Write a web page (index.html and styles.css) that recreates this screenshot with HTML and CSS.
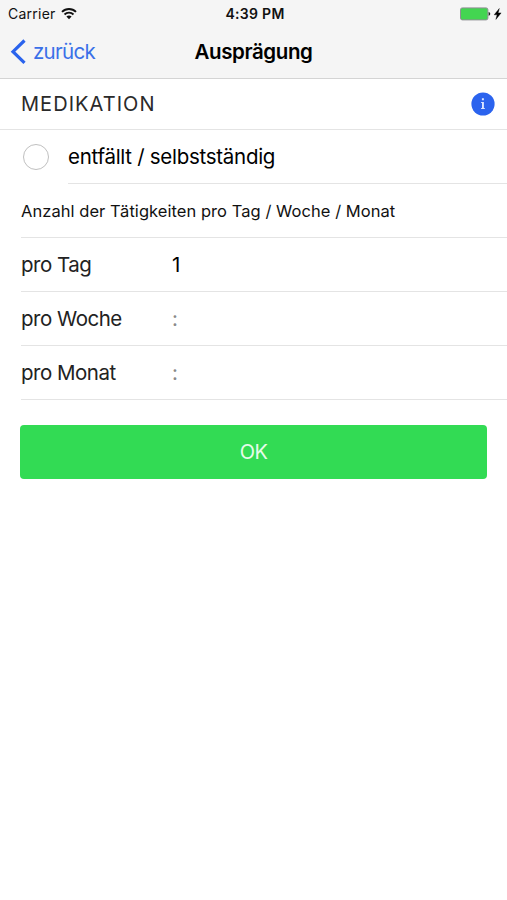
FILE: index.html
```html
<!DOCTYPE html>
<html lang="de">
<head>
  <meta charset="UTF-8" />
  <meta name="viewport" content="width=device-width, initial-scale=1.0"/>
  <title>Ausprägung</title>
  <link rel="stylesheet" href="styles.css">
</head>
<body>

  <!-- Header -->
  <header>
    <div class="statusbar">
      <div class="carrier">
        <span>Carrier</span>
        <svg class="wifi" viewBox="0 0 16 12" width="16" height="12">
          <path d="M1 3.9a10 10 0 0 1 14 0M3.5 6.5a6.4 6.4 0 0 1 9 0" fill="none" stroke="#111" stroke-width="1.9"/>
          <path d="M5.4 8.6a3.8 3.8 0 0 1 5.2 0L8 11.3z" fill="#111"/>
        </svg>
      </div>
      <div class="time">4:39 PM</div>
      <div class="power">
        <svg viewBox="0 0 42 14" width="42" height="14">
          <rect x="0.5" y="0.9" width="27.4" height="12" rx="1.8" fill="#43d551" stroke="#8f8f94"/>
          <path d="M28.6 5.1c2.2.3 2.2 3.4 0 3.7z" fill="#222"/>
          <path d="M39.3 1.5L34.2 7.8h2.9l-1.2 4.6 5.2-6.5h-3z" fill="#000" stroke="#000" stroke-width="0.4"/>
        </svg>
      </div>
    </div>
    <div class="navbar">
      <a href="#" class="back">
        <svg viewBox="0 0 16 26" width="16" height="26">
          <path d="M14.5 1.5L3 12.7l11.5 11.2" fill="none" stroke="#2a63ed" stroke-width="3.2"/>
        </svg>
        <span>zurück</span>
      </a>
      <h1>Ausprägung</h1>
    </div>
  </header>

  <!-- Form -->
  <main>
    <div class="list-header">
      <h2>MEDIKATION</h2>
      <button type="button" class="info" aria-label="Info">
        <svg viewBox="0 0 24 24" width="24" height="24">
          <circle cx="12" cy="12" r="11.6" fill="#2b63ee"/>
          <path d="M10.9 6.3h2v2h-2zM10.1 9.9h2.8v6.2h.9v1h-3.7v-1h.9v-5.2h-.9z" fill="#dbe5ff"/>
        </svg>
      </button>
    </div>

    <label class="option">
      <input type="radio" name="entfaellt">
      <span class="option-text">entfällt / selbstständig</span>
    </label>

    <div class="row hint"><span>Anzahl der Tätigkeiten pro Tag / Woche / Monat</span></div>
    <div class="row">
      <span class="label">pro Tag</span>
      <span class="value">1</span>
    </div>
    <div class="row">
      <span class="label">pro Woche</span>
      <span class="value empty">:</span>
    </div>
    <div class="row">
      <span class="label">pro Monat</span>
      <span class="value empty">:</span>
    </div>

    <button type="button" class="ok">OK</button>
  </main>

</body>
</html>
```
FILE: styles.css
```css
* {
  box-sizing: border-box;
}

body {
  margin: 0;
  min-height: 100vh;
  background: #fff;
  color: #111;
  font-family: Inter, "Liberation Sans", sans-serif;
  font-size: 20.5px;
}

header {
  height: 79px;
  background: #f5f5f5;
  border-bottom: 1px solid #d4d4d4;
}

.statusbar {
  display: grid;
  grid-template-columns: 1fr auto 1fr;
  align-items: center;
  height: 27px;
  padding: 0 5px 0 8px;
}

.carrier {
  display: flex;
  align-items: center;
  gap: 5px;
  font-size: 14px;
  letter-spacing: 0.25px;
}

.wifi {
  display: block;
}

.time {
  font-size: 14px;
  font-weight: 600;
  letter-spacing: 0.3px;
}

.power {
  display: flex;
  justify-content: flex-end;
}

.navbar {
  display: grid;
  grid-template-columns: 1fr auto 1fr;
  align-items: center;
  height: 49px;
  padding: 0 10px;
}

.back {
  display: flex;
  align-items: center;
  gap: 7px;
  color: #3a70e8;
  letter-spacing: -0.7px;
  text-decoration: none;
}

h1 {
  margin: 0;
  color: #000;
  font-size: 20.5px;
  font-weight: 600;
  letter-spacing: -0.4px;
}

.list-header {
  display: flex;
  align-items: center;
  justify-content: space-between;
  height: 51px;
  padding: 0 12px 0 21px;
  border-bottom: 1px solid #e4e4e4;
}

h2 {
  margin: 0;
  color: #2a2a2a;
  font-size: 20px;
  font-weight: 400;
  letter-spacing: 1.05px;
}

.info {
  padding: 0;
  border: none;
  background: none;
}

.info svg {
  display: block;
}

.option {
  display: flex;
  align-items: center;
  gap: 19px;
  height: 54px;
  padding-left: 23px;
}

.option input {
  appearance: none;
  width: 26px;
  height: 26px;
  margin: 0;
  border: 1.5px solid #c0c0c0;
  border-radius: 50%;
}

.option-text {
  display: flex;
  flex: 1;
  align-items: center;
  height: 54px;
  border-bottom: 1px solid #e4e4e4;
  color: #000;
  letter-spacing: -0.28px;
}

.row {
  display: flex;
  align-items: center;
  height: 54px;
  margin-left: 21px;
  border-bottom: 1px solid #e4e4e4;
}

.hint {
  font-size: 16.5px;
  letter-spacing: 0.05px;
}

.label {
  width: 151px;
  color: #222;
  letter-spacing: -0.5px;
}

.value {
  color: #000;
}

.empty {
  color: #8a8a8a;
}

.ok {
  display: block;
  width: calc(100% - 40px);
  height: 54px;
  margin: 25px 20px 0;
  border: none;
  border-radius: 4px;
  background: #32db54;
  color: #e6fbea;
  font-family: inherit;
  font-size: 20px;
  letter-spacing: -0.5px;
}
```
